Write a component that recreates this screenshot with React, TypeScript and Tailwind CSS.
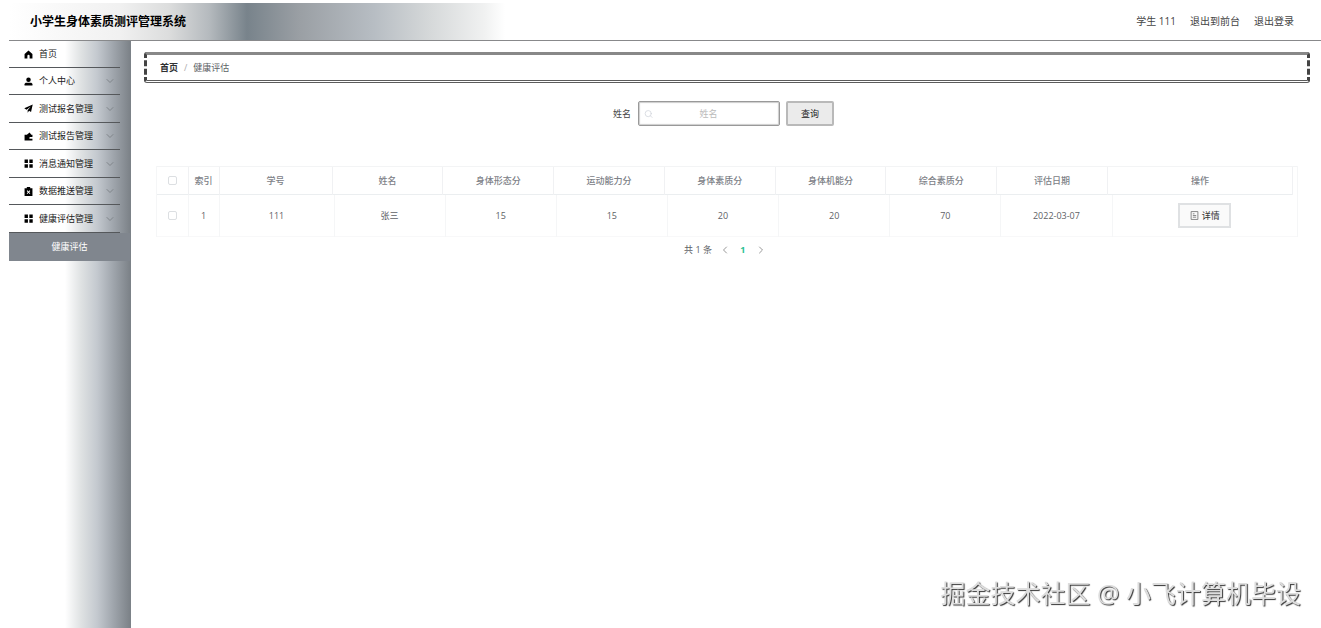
import { useState } from 'react';
import type { ReactNode } from 'react';
import { ChevronDown, ChevronLeft, ChevronRight, Search } from 'lucide-react';

const icons: Record<string, ReactNode> = {
  home: <path d="M8 1 1 7v8h5v-4.500a2 2 0 0 1 4 0V15h5V7z" />,
  user: (
    <>
      <circle cx="8" cy="5" r="4" />
      <path d="M1 15v-2c0-2 1.500-3 3.500-3h7c2 0 3.500 1 3.500 3v2z" />
    </>
  ),
  position: <path d="M15.500 1 .5 7.500l4 2.500L12 4.500 6.500 11v4.500L9 12l3.500 2z" />,
  wallet: (
    <path d="M1 5h4l5-4 3 4h2v4h-4a1 1 0 0 0 0 3h4v3H1z" />
  ),
  menu: <path d="M1 1h6v6H1zM9.500 1h6v6h-6zM1 9.500h6v6H1zM9.500 9.500h6v6h-6z" />,
  claim: (
    <path
      fillRule="evenodd"
      d="M5 0h6v2h4v14H1V2h4zm-.2 7 2 2.200-2 2.200 1.200 1.200 2-2.200 2 2.200 1.200-1.200-2-2.200 2-2.200L10 5.800 8 8 6 5.800z"
    />
  ),
};

const menus = [
  { name: '首页', icon: 'home' },
  { name: '个人中心', icon: 'user', sub: true },
  { name: '测试报名管理', icon: 'position', sub: true },
  { name: '测试报告管理', icon: 'wallet', sub: true },
  { name: '消息通知管理', icon: 'menu', sub: true },
  { name: '数据推送管理', icon: 'claim', sub: true },
  { name: '健康评估管理', icon: 'menu', sub: true },
];

const columns = ['学号', '姓名', '身体形态分', '运动能力分', '身体素质分', '身体机能分', '综合素质分', '评估日期'];

const rows = [['111', '张三', '15', '15', '20', '20', '70', '2022-03-07']];

function Checkbox({ label }: { label: string }) {
  return (
    <input
      type="checkbox"
      aria-label={label}
      className="block mx-auto size-[9px] appearance-none rounded-xs border border-[#dcdfe2] bg-white checked:bg-[#00c292]"
    />
  );
}

function Header() {
  return (
    <header className="ml-[9px] mt-[3px] flex h-[38px] items-center justify-between border-b border-[#88898b] bg-[linear-gradient(90deg,#fff_0px,#f1f1f1_110px,#dcdddd_160px,#b5babe_200px,#78838b_238px,#9a9fa4_290px,#b7bdc3_365px,#d5d8d9_420px,#f0f1f1_475px,#fff_496px)] pl-[21px] pr-[27px]">
      <h1 className="text-[12px] font-bold text-black">小学生身体素质测评管理系统</h1>
      <nav className="flex gap-[14px] text-[10px] text-[#444]">
        <span>学生 111</span>
        <a href="#front">退出到前台</a>
        <a href="#logout">退出登录</a>
      </nav>
    </header>
  );
}

function Sidebar() {
  return (
    <aside className="ml-[9px] w-[122px] shrink-0 border-r border-[#7c8288] bg-[linear-gradient(90deg,#fff_56px,#dfe2e3_72px,#c4c9cf_88px,#a0a6ad_104px,#7c8288_121px)]">
      <ul>
        {menus.map((item) => (
          <li key={item.name} className="mr-[10px] h-[27px] not-first:odd:h-7">
            <a
              href="#menu"
              className="flex h-full items-center border-b border-[#55585b] pl-[15px] pr-[4px] text-[9px] text-[#222]"
            >
              <svg viewBox="0 0 16 16" className="mr-[6px] size-[9px] fill-black">
                {icons[item.icon]}
              </svg>
              <span className="flex-1">{item.name}</span>
              {item.sub && <ChevronDown size={12} strokeWidth={2} className="text-[#80858a]" />}
            </a>
          </li>
        ))}
      </ul>
      <a href="#health" className="flex h-7 items-center justify-center bg-[#80868e] text-[9px] text-white">
        健康评估
      </a>
    </aside>
  );
}

function Breadcrumb() {
  return (
    <nav className="flex h-[31px] items-center gap-[6px] rounded-[3px] border-x-3 border-t-3 border-b-3 border-x-[#444] border-t-[#888] border-b-[#5c5c5c] [border-style:solid_dashed_double] px-[13px] text-[9px]">
      <a href="#home" className="font-bold text-[#303133]">首页</a>
      <span className="text-[#aaa]">/</span>
      <span className="text-[#606266]">健康评估</span>
    </nav>
  );
}

function SearchForm() {
  const [name, setName] = useState('');

  return (
    <form className="mt-[18px] flex items-center justify-center pr-[7px] text-[9px]" onSubmit={(e) => e.preventDefault()}>
      <label htmlFor="name" className="mr-[7px] text-[#444]">姓名</label>
      <div className="mr-[6px] flex h-[25px] w-[142px] items-center rounded-xs border border-[#999] bg-white px-[5px] shadow-[inset_0_0_1px_1px_#ccc]">
        <Search size={10} className="text-gray-300" />
        <input
          id="name"
          value={name}
          onChange={(e) => setName(e.target.value)}
          placeholder="姓名"
          className="w-full min-w-0 pr-[10px] text-center outline-none placeholder:text-[#bbb]"
        />
      </div>
      <button type="submit" className="h-[25px] w-12 rounded-xs border-2 border-[#b9b9b9] bg-[#ebebeb] text-[#222]">
        查询
      </button>
    </form>
  );
}

function DataTable() {
  return (
    <section className="mt-10 ml-3 mr-3 border-x border-[#f5f6f7] text-[9px] text-[#606266]">
      {/* Header and body are separate tables, the header leaves room for the scrollbar */}
      <div className="border-t border-[#f3f4f5] pr-1">
        <table className="w-full table-fixed text-center">
          <thead>
            <tr className="h-[27px] border-b border-[#ebeef0] *:border-r *:border-[#f0f1f3] *:p-0 *:font-medium *:text-[#7d8187]">
              <th className="w-[31px]"><Checkbox label="全选" /></th>
              <th className="w-[31px]">索引</th>
              {columns.map((col) => (
                <th key={col} className="nth-3:w-[113px]">{col}</th>
              ))}
              <th className="w-[185px]">操作</th>
            </tr>
          </thead>
        </table>
      </div>
      <table className="w-full table-fixed text-center">
        <tbody>
          {rows.map((row, i) => (
            <tr key={i} className="h-[42px] border-b border-[#f8f8f9] *:border-r *:border-[#f5f6f7] *:p-0 *:last:border-r-0">
              <td className="w-[31px]"><Checkbox label="选择" /></td>
              <td className="w-[31px]">{i + 1}</td>
              {row.map((cell, j) => (
                <td key={j} className="nth-3:w-[115px]">{cell}</td>
              ))}
              <td className="w-[185px]">
                <button className="inline-flex h-[25px] w-[53px] items-center justify-center gap-[3px] border-2 border-[#dfe1e3] bg-[#fafafa] text-[#333]">
                  <svg viewBox="0 0 16 16" className="size-[9px] fill-none stroke-[#777] stroke-[1.5]">
                    <path d="M2 1h12v14H2zM5 5h3M5 8h6M5 11h6" />
                  </svg>
                  详情
                </button>
              </td>
            </tr>
          ))}
        </tbody>
      </table>
    </section>
  );
}

function Pagination() {
  return (
    <div className="mt-[6px] flex items-center justify-center pr-[3px] text-[9px] text-[#606266]">
      <span className="mr-[7px]">共 1 条</span>
      <button aria-label="上一页" className="text-[#999]"><ChevronLeft size={12} /></button>
      <button className="w-6 font-bold text-[#2bbf94]">1</button>
      <button aria-label="下一页" className="text-[#999]"><ChevronRight size={12} /></button>
    </div>
  );
}

export default function App() {
  return (
    <div className="flex min-h-screen flex-col bg-white font-['Open_Sans','Noto_Sans_CJK_SC',sans-serif]">
      <Header />
      <div className="flex flex-1">
        <Sidebar />
        <main className="min-w-0 flex-1 pl-[13px] pr-[11px] pt-[11px]">
          <Breadcrumb />
          <SearchForm />
          <DataTable />
          <Pagination />
        </main>
      </div>
      <div className="fixed bottom-[18px] right-5 text-[25px] leading-[34px] text-[#ddd] [text-shadow:1px_1px_1px_#333]">
        掘金技术社区 @ 小飞计算机毕设
      </div>
    </div>
  );
}
